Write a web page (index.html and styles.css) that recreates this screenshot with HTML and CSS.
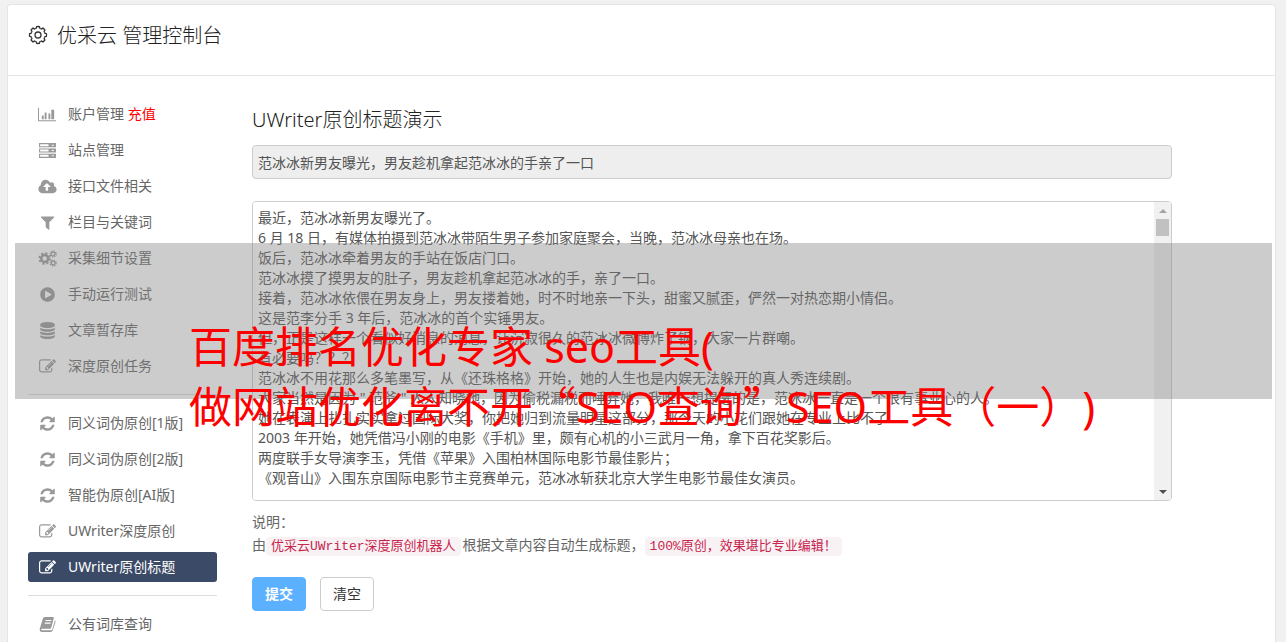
FILE: index.html
```html
<!DOCTYPE html>
<html lang="zh-CN">
<head>
    <meta charset="UTF-8">
    <meta name="viewport" content="width=device-width, initial-scale=1.0">
    <title>优采云 管理控制台</title>
    <link rel="stylesheet" href="styles.css">
</head>
<body>
    <!-- icons -->
    <svg class="sprite" aria-hidden="true">
        <symbol id="i-chart" viewBox="0 0 20 16"><path d="M0 1h1v13h18v1H0zM4 9h2v4H4zM7 6h2v7H7zM11 7h2v6h-2zM14 3h3v10h-3z"/></symbol>
        <symbol id="i-server" viewBox="0 0 18 16"><path fill-rule="evenodd" d="M1 1h16v4H1zM2 2v2h8V2zM13 2.500v1h2v-1zM1 6h16v4H1zM2 7v2h8V7zM13 7.500v1h2v-1zM1 11h16v4H1zM2 12v2h8v-2zM13 12.500v1h2v-1z"/></symbol>
        <symbol id="i-cloud" viewBox="0 0 1920 1792"><path d="M1280 928q0-14-9-23l-352-352q-9-9-23-9t-23 9l-351 351q-10 12-10 24 0 14 9 23t23 9h224v352q0 13 9.500 22.500t22.500 9.500h192q13 0 22.500-9.500t9.500-22.500v-352h224q13 0 22.500-9.500t9.500-22.500zm640 288q0 159-112.500 271.500t-271.500 112.500h-1088q-185 0-316.500-131.500t-131.500-316.500q0-130 70-240t188-165q-2-30-2-43 0-212 150-362t362-150q156 0 285.500 87t188.500 231q71-62 166-62 106 0 181 75t75 181q0 76-41 138 130 31 213.500 135.500t83.500 238.500z"/></symbol>
        <symbol id="i-filter" viewBox="0 0 1792 1792"><path d="M1595 295q17 41-14 70l-493 493v742q0 42-39 59-13 5-25 5-27 0-45-19l-256-256q-19-19-19-45v-486l-493-493q-31-29-14-70 17-39 59-39h1280q42 0 59 39z"/></symbol>
        <symbol id="i-gears" viewBox="0 0 20 18">
            <g fill="none" stroke="currentColor">
                <circle cx="7" cy="9" r="3.700" stroke-width="2.600"/>
                <circle cx="7" cy="9" r="5.700" stroke-width="1.800" stroke-dasharray="2.300 2.177"/>
                <circle cx="16" cy="4.200" r="2" stroke-width="1.300"/>
                <circle cx="16" cy="4.200" r="3.200" stroke-width="1.300" stroke-dasharray="1.300 1.213"/>
                <circle cx="16" cy="13.800" r="2" stroke-width="1.300"/>
                <circle cx="16" cy="13.800" r="3.200" stroke-width="1.300" stroke-dasharray="1.300 1.213"/>
            </g>
        </symbol>
        <symbol id="i-play" viewBox="0 0 1792 1792"><path d="M896 128q209 0 385.500 103t279.500 279.500 103 385.500-103 385.500-279.500 279.500-385.500 103-385.500-103-279.500-279.500-103-385.500 103-385.500 279.500-279.500 385.500-103zm384 823q32-18 32-55t-32-55l-544-320q-31-19-64-1-32 19-32 56v640q0 37 32 56 16 8 32 8 17 0 32-9z"/></symbol>
        <symbol id="i-database" viewBox="0 0 1792 1792"><path d="M896 768q237 0 443-43t325-127v170q0 69-103 128t-280 93.500-385 34.500-385-34.500-280-93.500-103-128v-170q119 84 325 127t443 43zm0 768q237 0 443-43t325-127v170q0 69-103 128t-280 93.500-385 34.500-385-34.500-280-93.500-103-128v-170q119 84 325 127t443 43zm0-384q237 0 443-43t325-127v170q0 69-103 128t-280 93.500-385 34.500-385-34.500-280-93.500-103-128v-170q119 84 325 127t443 43zm0-1152q208 0 385 34.500t280 93.500 103 128v128q0 69-103 128t-280 93.500-385 34.500-385-34.500-280-93.500-103-128v-128q0-69 103-128t280-93.500 385-34.500z"/></symbol>
        <symbol id="i-edit" viewBox="0 0 1792 1792"><path d="M888 1184l116-116-152-152-116 116v56h96v96h56zm440-720q-16-16-33 1l-350 350q-17 17-1 33t33-1l350-350q17-17 1-33zm80 594v190q0 119-84.500 203.500t-203.500 84.500h-832q-119 0-203.500-84.500t-84.500-203.500v-832q0-119 84.500-203.500t203.500-84.500h832q63 0 117 25 15 7 18 23 3 17-9 29l-49 49q-14 14-32 8-23-6-45-6h-832q-66 0-113 47t-47 113v832q0 66 47 113t113 47h832q66 0 113-47t47-113v-126q0-13 9-22l64-64q15-15 35-7t20 29zm-96-738l288 288-672 672h-288v-288zm444 132l-92 92-288-288 92-92q28-28 68-28t68 28l152 152q28 28 28 68t-28 68z"/></symbol>
        <symbol id="i-refresh" viewBox="0 0 1792 1792"><path d="M1639 1056q0 5-1 7-64 268-268 434.500t-478 166.500q-146 0-282.500-55t-243.500-157l-129 129q-19 19-45 19t-45-19-19-45v-448q0-26 19-45t45-19h448q26 0 45 19t19 45-19 45l-137 137q71 66 161 102t187 36q134 0 250-65t186-179q11-17 53-117 8-23 30-23h192q13 0 22.500 9.500t9.500 22.500zm25-800v448q0 26-19 45t-45 19h-448q-26 0-45-19t-19-45 19-45l138-138q-148-137-349-137-134 0-250 65t-186 179q-11 17-53 117-8 23-30 23h-199q-13 0-22.500-9.500t-9.500-22.500v-7q65-268 270-434.500t480-166.500q146 0 284 55.500t245 156.500l130-129q19-19 45-19t45 19 19 45z"/></symbol>
        <symbol id="i-book" viewBox="0 0 16 16"><path fill-rule="evenodd" d="M5.500 1H13q1.200 0 .9 1.200L11.500 11q-.3 1-1.300 1H3q-1 0-1 .8t1 .7h8.500q.8 0 1-.8L15 4q.8.600.5 1.600L13 13.500q-.5 1.500-2 1.500H3Q.300 15 .700 12L3.600 2.500Q4.100 1 5.500 1zM6.300 3.800 6 4.800h5.500l.3-1zM5.600 6.200l-.3 1h5.500l.3-1z"/></symbol>
    </svg>

    <div class="panel">
        <header class="panel-header">
            <svg class="logo" viewBox="-10 -10 20 20">
                <defs><path id="tooth" d="M6.470-2.680A7 7 0 0 1 6.760-1.810L8.400-1.330A8.500 8.500 0 0 1 8.400 1.330L6.760 1.810A7 7 0 0 1 6.470 2.680"/></defs>
                <use href="#tooth"/>
                <use href="#tooth" transform="rotate(45)"/>
                <use href="#tooth" transform="rotate(90)"/>
                <use href="#tooth" transform="rotate(135)"/>
                <use href="#tooth" transform="rotate(180)"/>
                <use href="#tooth" transform="rotate(225)"/>
                <use href="#tooth" transform="rotate(270)"/>
                <use href="#tooth" transform="rotate(315)"/>
                <circle r="3"/>
            </svg>
            <h1>优采云 管理控制台</h1>
        </header>

        <div class="panel-body">
            <nav class="sidebar">
                <a href="#"><svg class="icon"><use href="#i-chart"/></svg><span>账户管理 <em>充值</em></span></a>
                <a href="#"><svg class="icon"><use href="#i-server"/></svg>站点管理</a>
                <a href="#"><svg class="icon"><use href="#i-cloud"/></svg>接口文件相关</a>
                <a href="#"><svg class="icon"><use href="#i-filter"/></svg>栏目与关键词</a>
                <a href="#"><svg class="icon"><use href="#i-gears"/></svg>采集细节设置</a>
                <a href="#"><svg class="icon"><use href="#i-play"/></svg>手动运行测试</a>
                <a href="#"><svg class="icon"><use href="#i-database"/></svg>文章暂存库</a>
                <a href="#"><svg class="icon"><use href="#i-edit"/></svg>深度原创任务</a>
                <hr>
                <a href="#"><svg class="icon"><use href="#i-refresh"/></svg>同义词伪原创[1版]</a>
                <a href="#"><svg class="icon"><use href="#i-refresh"/></svg>同义词伪原创[2版]</a>
                <a href="#"><svg class="icon"><use href="#i-refresh"/></svg>智能伪原创[AI版]</a>
                <a href="#"><svg class="icon"><use href="#i-edit"/></svg>UWriter深度原创</a>
                <a href="#" class="active"><svg class="icon"><use href="#i-edit"/></svg>UWriter原创标题</a>
                <hr>
                <a href="#"><svg class="icon"><use href="#i-book"/></svg>公有词库查询</a>
            </nav>

            <form class="main">
                <h2>UWriter原创标题演示</h2>
                <input type="text" class="title-input" aria-label="标题" value="范冰冰新男友曝光，男友趁机拿起范冰冰的手亲了一口" readonly>
                <div class="editor">
                    <textarea aria-label="文章内容" spellcheck="false">最近，范冰冰新男友曝光了。
6 月 18 日，有媒体拍摄到范冰冰带陌生男子参加家庭聚会，当晚，范冰冰母亲也在场。
饭后，范冰冰牵着男友的手站在饭店门口。
范冰冰摸了摸男友的肚子，男友趁机拿起范冰冰的手，亲了一口。
接着，范冰冰依偎在男友身上，男友搂着她，时不时地亲一下头，甜蜜又腻歪，俨然一对热恋期小情侣。
这是范李分手 3 年后，范冰冰的首个实锤男友。
但，正是这样一个看似好消息的消息，让沉寂很久的范冰冰微博炸了锅，大家一片群嘲。
有必要吗？？？
范冰冰不用花那么多笔墨写，从《还珠格格》开始，她的人生也是内娱无法躲开的真人秀连续剧。
大家当然是因为 " 范爷 " 人人知晓她，因为偷税漏税而唾弃她，我唯一想提醒的是，范冰冰一直是一个很有事业心的人。
她在表演上扎扎实实拿过国际大奖，你把她归到流量明星这部分，那今天的小花们跟她在专业上比不了
2003 年开始，她凭借冯小刚的电影《手机》里，颇有心机的小三武月一角，拿下百花奖影后。
两度联手女导演李玉，凭借《苹果》入围柏林国际电影节最佳影片；
《观音山》入围东京国际电影节主竞赛单元，范冰冰斩获北京大学生电影节最佳女演员。</textarea>
                    <div class="scrollbar">
                        <span class="arrow up"></span>
                        <span class="thumb"></span>
                        <span class="arrow down"></span>
                    </div>
                </div>
                <p class="note">说明：<br>由<code>优采云UWriter深度原创机器人</code>根据文章内容自动生成标题，<code>100%原创，效果堪比专业编辑！</code></p>
                <div class="actions">
                    <button type="submit" class="btn btn-primary">提交</button>
                    <button type="reset" class="btn">清空</button>
                </div>
            </form>
        </div>
    </div>

    <div class="banner">
        <p>百度排名优化专家 seo工具(<br>做网站优化离不开<span class="quote">“</span>SEO查询<span class="quote">”</span>SEO工具（一）)</p>
    </div>
</body>
</html>
```
FILE: styles.css
```css
* {
    box-sizing: border-box;
}

body {
    margin: 0;
    padding: 4px 10px 0 7px;
    min-height: 100vh;
    display: flex;
    flex-direction: column;
    position: relative;
    background: #f1f1f1;
    color: #555;
    font-family: "Noto Sans", "Noto Sans CJK SC", sans-serif;
    font-size: 14px;
    line-height: 20px;
}

.sprite {
    display: none;
}

.panel {
    flex: 1;
    background: #fff;
    border: 1px solid #e5e5e5;
    border-bottom: none;
    border-radius: 4px 4px 0 0;
}

.panel-header {
    display: flex;
    align-items: center;
    gap: 9px;
    height: 71px;
    padding: 0 20px 10px;
    border-bottom: 1px solid #e5e5e5;
}

.logo {
    width: 20px;
    height: 20px;
    fill: none;
    stroke: #333;
    stroke-width: 1.3;
}

h1, h2 {
    margin: 0;
    padding-top: 2px;
    font-size: 20px;
    line-height: 28px;
    font-weight: 300;
    color: #222;
}

.panel-body {
    display: flex;
    gap: 35px;
    padding: 23px 20px 0;
}

.sidebar {
    flex: none;
    width: 189px;
    display: flex;
    flex-direction: column;
    gap: 6px;
    padding-bottom: 3px;
}

.sidebar a {
    display: flex;
    align-items: center;
    gap: 11px;
    height: 30px;
    padding: 0 10px;
    border-radius: 3px;
    color: #666;
    text-decoration: none;
}

.sidebar a.active {
    background: #3b4a66;
    color: #fff;
}

.sidebar em {
    font-style: normal;
    color: #f00;
}

.sidebar hr {
    width: 100%;
    margin: 7px 0;
    border: none;
    border-top: 1px solid #ddd;
}

.icon {
    width: 19px;
    height: 17px;
    fill: currentColor;
    color: #999;
}

.active .icon {
    color: #fff;
}

.main {
    flex: 1;
    max-width: 920px;
    padding-top: 5px;
}

.title-input {
    display: block;
    width: 100%;
    height: 34px;
    margin: 11px 0 22px;
    padding: 0 5px;
    border: 1px solid #ccc;
    border-radius: 4px;
    background: #eee;
    color: #555;
    font: inherit;
}

.editor {
    position: relative;
    height: 300px;
    border: 1px solid #ccc;
    border-radius: 4px;
    overflow: hidden;
}

textarea {
    display: block;
    width: 100%;
    height: 100%;
    padding: 6px 22px 6px 5px;
    border: none;
    outline: none;
    resize: none;
    overflow: hidden;
    background: #fff;
    color: #555;
    font: inherit;
}

.scrollbar {
    position: absolute;
    top: 0;
    right: 0;
    bottom: 0;
    width: 17px;
    display: flex;
    flex-direction: column;
    align-items: center;
    background: #f1f1f1;
}

.thumb {
    width: 13px;
    height: 17px;
    background: #c1c1c1;
}

.arrow {
    height: 17px;
    display: flex;
    align-items: center;
}

.arrow::before {
    content: "";
    border: 4px solid transparent;
    border-top-width: 0;
    border-bottom-color: #a3a3a3;
}

.arrow.down {
    margin-top: auto;
}

.arrow.down::before {
    border-width: 4px 4px 0;
    border-top-color: #505050;
}

.note {
    margin: 9px 0 21px;
    line-height: 23px;
    color: #666;
}

code {
    margin-right: 2px;
    padding: 2px 5px;
    border-radius: 4px;
    background: #f9f2f4;
    color: #c7254e;
    font-family: "Liberation Mono", "Noto Sans CJK SC", monospace;
    font-size: 13px;
    line-height: 18px;
}

.actions {
    display: flex;
    gap: 14px;
}

.btn {
    height: 34px;
    padding: 0 12px;
    border: 1px solid #ccc;
    border-radius: 4px;
    background: #fff;
    color: #333;
    font: inherit;
    cursor: pointer;
}

.btn-primary {
    border-color: #5bb0ff;
    background: #5bb0ff;
    color: #fff;
    font-weight: 700;
}

/* translucent strip over the page */
.banner {
    position: absolute;
    top: 243px;
    left: 15px;
    right: 14px;
    height: 156px;
    padding: 74px 0 0 174px;
    background: rgba(128, 128, 128, 0.4);
    pointer-events: none;
}

.banner p {
    margin: 0;
    color: #f00;
    font-size: 43px;
    line-height: 60px;
    white-space: nowrap;
    text-spacing-trim: space-all;
}

/* full-width quotation marks */
.quote {
    font-family: "Noto Sans CJK SC", sans-serif;
    line-height: 1;
}
```
